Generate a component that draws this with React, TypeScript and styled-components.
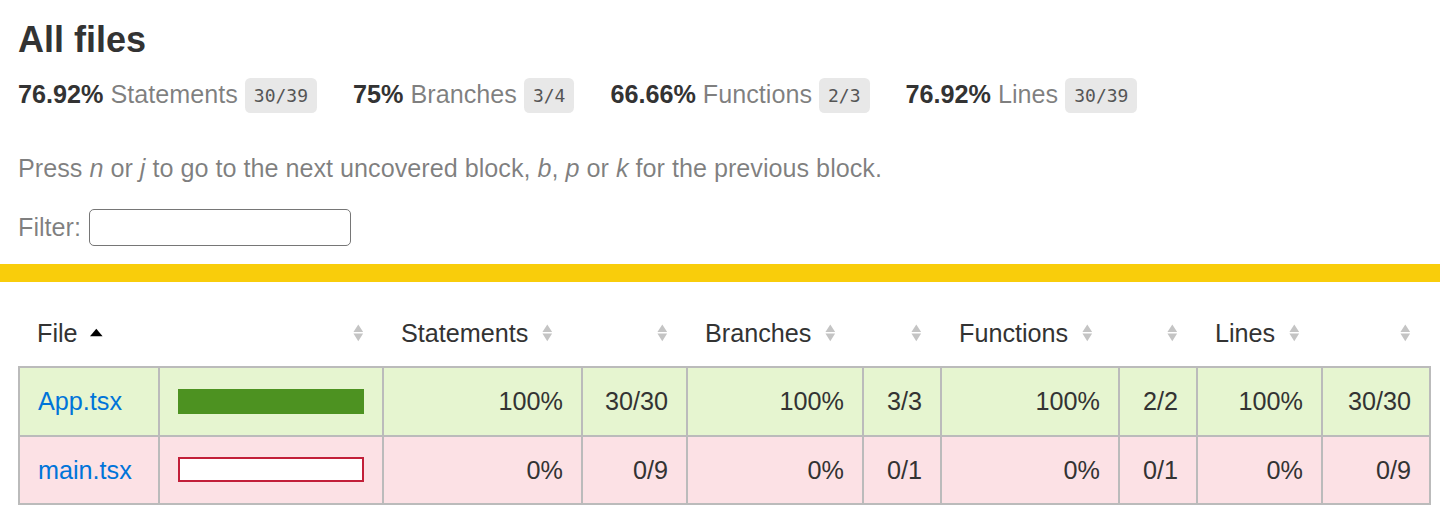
import React from 'react';
import styled, { createGlobalStyle } from 'styled-components';

const GlobalStyle = createGlobalStyle`
  *, *::before, *::after { box-sizing: border-box; }
  html, body { margin: 0; padding: 0; overflow: hidden; background: #fff; }
  body {
    font-family: "Liberation Sans", Arial, Helvetica, sans-serif;
    font-size: 25.2px;
    line-height: 1.2;
    color: #333;
  }
`;

type Level = 'high' | 'low';

const levelBg: Record<Level, string> = { high: '#e6f5d0', low: '#fce1e5' };
const levelBorder: Record<Level, string> = { high: '#4d9221', low: '#c21f39' };

const Pad = styled.div`
  padding: 18px;
`;

const Title = styled.h1`
  margin: 0;
  font-size: 36px;
  line-height: 1.2;
  font-weight: bold;
  color: #333;
`;

const StatsRow = styled.div`
  display: flex;
  flex-wrap: wrap;
`;

const Stat = styled.div`
  padding: 18px 36px 18px 0;
  white-space: nowrap;
`;

const Strong = styled.span`
  font-weight: bold;
`;

const Quiet = styled.span`
  color: rgba(0, 0, 0, 0.5);
`;

const Fraction = styled.span`
  font-family: "DejaVu Sans Mono", "Liberation Mono", monospace;
  font-size: 18px;
  line-height: 1.15;
  color: #555;
  background: #e8e8e8;
  padding: 7.2px 9px;
  border-radius: 5.4px;
  vertical-align: middle;
`;

const Hint = styled.p`
  margin: 25.2px 0;
  color: rgba(0, 0, 0, 0.5);
`;

const FilterRow = styled.div`
  color: rgba(0, 0, 0, 0.5);
  display: flex;
  align-items: center;
  gap: 8px;
  min-height: 38px;
`;

const FilterInput = styled.input`
  width: 262px;
  height: 37px;
  border: 1px solid #767676;
  border-radius: 5px;
  background: #fff;
  font: inherit;
  padding: 0 6px;
  outline: none;
`;

const StatusLine = styled.div<{ $color: string }>`
  height: 18px;
  background: ${(p) => p.$color};
`;

const TableWrap = styled.div`
  padding: 18px 10px 18px 18px;
`;

const Table = styled.table`
  border-collapse: collapse;
  table-layout: fixed;
  width: 1412px;
`;

const HeadRow = styled.tr`
  border-bottom: 2px solid #bbb;
`;

const Th = styled.th<{ $align?: 'left' | 'right' }>`
  padding: 18px;
  font-weight: normal;
  white-space: nowrap;
  text-align: ${(p) => p.$align ?? 'left'};
  color: #333;
`;

const Body = styled.tbody`
  border: 2px solid #bbb;
`;

const Row = styled.tr<{ $level: Level }>`
  border-bottom: 2px solid #bbb;
  background: ${(p) => levelBg[p.$level]};
`;

const Td = styled.td<{ $align?: 'left' | 'right' }>`
  padding: 18px;
  border-right: 2px solid #bbb;
  text-align: ${(p) => p.$align ?? 'left'};
  white-space: nowrap;
  &:last-child { border-right: none; }
`;

const FileLink = styled.a`
  color: #0074d9;
  text-decoration: none;
`;

const Chart = styled.div<{ $level: Level }>`
  display: flex;
  height: 25px;
  border: 2px solid ${(p) => levelBorder[p.$level]};
  background: #fff;
`;

const Fill = styled.div<{ $level: Level }>`
  height: 100%;
  background: ${(p) => levelBorder[p.$level]};
`;

const SorterBox = styled.span`
  display: inline-block;
  width: 12.6px;
  height: 18px;
  margin-left: 0.5em;
  vertical-align: baseline;
  svg { display: block; overflow: visible; }
`;

const Sorter: React.FC<{ sorted?: boolean }> = ({ sorted }) => (
  <SorterBox>
    <svg width="12.6" height="18" viewBox="0 0 7 10">
      {sorted ? (
        <polygon points="0,6.8 3.5,2.7 7,6.8" fill="#000" />
      ) : (
        <>
          <polygon points="0.8,4.4 3.5,0.3 6.2,4.4" fill="#c4c4c4" />
          <polygon points="0.8,5.3 6.2,5.3 3.5,9.6" fill="#c4c4c4" />
        </>
      )}
    </svg>
  </SorterBox>
);

const stats = [
  { pct: '76.92%', label: 'Statements', frac: '30/39' },
  { pct: '75%', label: 'Branches', frac: '3/4' },
  { pct: '66.66%', label: 'Functions', frac: '2/3' },
  { pct: '76.92%', label: 'Lines', frac: '30/39' },
];

const colWidths = [140, 224, 199, 105, 176, 78, 178, 78, 125, 108];

type FileRow = {
  name: string;
  level: Level;
  fill: number;
  cells: [string, string][];
};

const files: FileRow[] = [
  {
    name: 'App.tsx',
    level: 'high',
    fill: 100,
    cells: [
      ['100%', '30/30'],
      ['100%', '3/3'],
      ['100%', '2/2'],
      ['100%', '30/30'],
    ],
  },
  {
    name: 'main.tsx',
    level: 'low',
    fill: 0,
    cells: [
      ['0%', '0/9'],
      ['0%', '0/1'],
      ['0%', '0/1'],
      ['0%', '0/9'],
    ],
  },
];

const metricHeads = ['Statements', 'Branches', 'Functions', 'Lines'];

export default function App() {
  return (
    <>
      <GlobalStyle />
      <Pad>
        <Title>All files</Title>
        <StatsRow>
          {stats.map((s) => (
            <Stat key={s.label}>
              <Strong>{s.pct} </Strong>
              <Quiet>{s.label}</Quiet> <Fraction>{s.frac}</Fraction>
            </Stat>
          ))}
        </StatsRow>
        <Hint>
          Press <em>n</em> or <em>j</em> to go to the next uncovered block, <em>b</em>,{' '}
          <em>p</em> or <em>k</em> for the previous block.
        </Hint>
        <FilterRow>
          Filter:
          <FilterInput type="search" />
        </FilterRow>
      </Pad>
      <StatusLine $color="#f9cd0b" />
      <TableWrap>
        <Table>
          <colgroup>
            {colWidths.map((w, i) => (
              <col key={i} style={{ width: w }} />
            ))}
          </colgroup>
          <thead>
            <HeadRow>
              <Th>
                File<Sorter sorted />
              </Th>
              <Th $align="right">
                <Sorter />
              </Th>
              {metricHeads.map((h) => (
                <React.Fragment key={h}>
                  <Th>
                    {h}
                    <Sorter />
                  </Th>
                  <Th $align="right">
                    <Sorter />
                  </Th>
                </React.Fragment>
              ))}
            </HeadRow>
          </thead>
          <Body>
            {files.map((f) => (
              <Row key={f.name} $level={f.level}>
                <Td>
                  <FileLink href="#">{f.name}</FileLink>
                </Td>
                <Td>
                  <Chart $level={f.level}>
                    <Fill $level={f.level} style={{ width: `${f.fill}%` }} />
                  </Chart>
                </Td>
                {f.cells.map(([pct, abs], i) => (
                  <React.Fragment key={i}>
                    <Td $align="right">{pct}</Td>
                    <Td $align="right">{abs}</Td>
                  </React.Fragment>
                ))}
              </Row>
            ))}
          </Body>
        </Table>
      </TableWrap>
    </>
  );
}
